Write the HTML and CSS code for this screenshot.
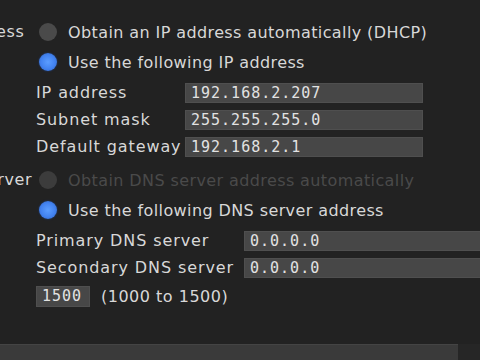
FILE: index.html
```html
<!DOCTYPE html>
<html lang="en">
<head>
    <meta charset="UTF-8">
    <meta name="viewport" content="width=device-width, initial-scale=1.0">
    <title>Network Settings</title>
    <link rel="stylesheet" href="styles.css">
</head>
<body>
    <div class="panel">
        <div class="group ip-group">
            <div class="group-title">IP address</div>
            <div class="group-body">
                <div class="option"><span class="radio"></span>Obtain an IP address automatically (DHCP)</div>
                <div class="option"><span class="radio checked"></span>Use the following IP address</div>
                <div class="fields ip-fields">
                    <span class="field-label">IP address</span><span class="input">192.168.2.207</span>
                    <span class="field-label">Subnet mask</span><span class="input">255.255.255.0</span>
                    <span class="field-label">Default gateway</span><span class="input">192.168.2.1</span>
                </div>
            </div>
        </div>

        <div class="group dns-group">
            <div class="group-title">DNS server</div>
            <div class="group-body">
                <div class="option disabled"><span class="radio"></span>Obtain DNS server address automatically</div>
                <div class="option"><span class="radio checked"></span>Use the following DNS server address</div>
                <div class="fields dns-fields">
                    <span class="field-label">Primary DNS server</span><span class="input">0.0.0.0</span>
                    <span class="field-label">Secondary DNS server</span><span class="input">0.0.0.0</span>
                </div>
                <div class="mtu">
                    <span class="input small">1500</span>
                    <span>(1000 to 1500)</span>
                </div>
            </div>
        </div>
    </div>

    <div class="footer">
        <div class="footer-bar"></div>
    </div>
</body>
</html>
```

FILE: styles.css
```css
body {
    margin: 0;
    width: 480px;
    height: 360px;
    overflow: hidden;
    background-color: #222;
    color: #d8d8d8;
    font-family: 'DejaVu Sans', sans-serif;
    font-size: 16px;
    letter-spacing: 0.5px;
    display: flex;
    flex-direction: column;
}
.panel {
    flex: 1;
    padding-top: 17px;
}
.group {
    display: flex;
}
.group-title {
    width: 36px;
    flex-shrink: 0;
    white-space: nowrap;
    text-indent: -64px;
    line-height: 30px;
    letter-spacing: 0.6px;
}
.group-body {
    flex: 1;
    min-width: 0;
}
.option {
    display: flex;
    align-items: center;
    height: 30px;
    white-space: nowrap;
    letter-spacing: 0.4px;
}
.option.disabled {
    color: #4a4a4a;
}
.radio {
    width: 18px;
    height: 18px;
    border-radius: 50%;
    background-color: #4a4a4a;
    margin: 0 11px 0 3px;
    flex-shrink: 0;
}
.option.disabled .radio {
    background-color: #3c3c3c;
}
.radio.checked {
    background: radial-gradient(circle at 50% 50%, #5b9dff 0, #4282f0 55%, #2d5fb8 100%);
    box-shadow: 0 0 2px #1d3f80;
}
.fields {
    display: grid;
    align-items: center;
    white-space: nowrap;
}
.field-label {
    letter-spacing: 0.9px;
}
.ip-fields {
    grid-template-columns: 149px 238px;
    grid-auto-rows: 27px;
    margin-top: 2px;
}
.dns-fields {
    grid-template-columns: 208px 260px;
    grid-auto-rows: 27px;
    margin-top: 2px;
}
.input {
    background-color: #474747;
    color: #e2e2e2;
    font-family: 'DejaVu Sans Mono', monospace;
    font-size: 15px;
    letter-spacing: 1px;
    height: 20px;
    line-height: 20px;
    padding-left: 6px;
    box-shadow: inset 0 0 0 1px #4f4f4f;
}
.dns-group {
    margin-top: 5px;
}
.mtu {
    display: flex;
    align-items: center;
    gap: 11px;
    height: 30px;
}
.input.small {
    width: 48px;
    height: 21px;
    line-height: 21px;
}
.footer {
    height: 16px;
    display: flex;
    background-color: #262626;
}
.footer-bar {
    width: 458px;
    background-color: #3a3a3a;
    border-top: 1px solid #444;
}
```
